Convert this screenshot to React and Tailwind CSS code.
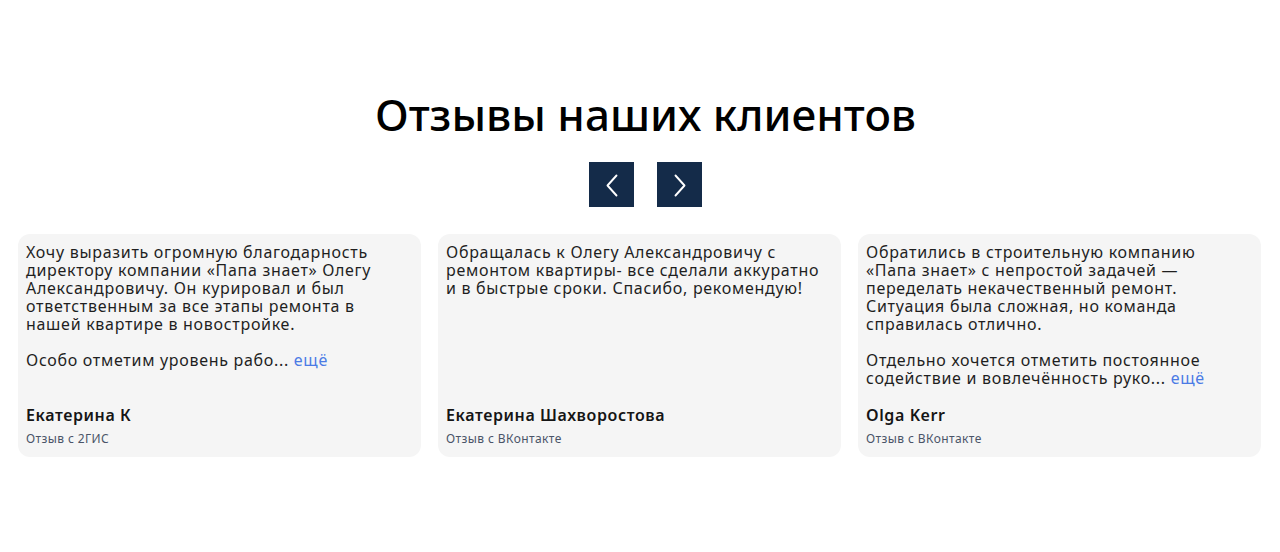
import React from 'react'

// Lines are kept as they wrap on the live site
const REVIEWS = [
  {
    id: 1,
    text: [
      [
        'Хочу выразить огромную благодарность',
        'директору компании «Папа знает» Олегу',
        'Александровичу. Он курировал и был',
        'ответственным за все этапы ремонта в',
        'нашей квартире в новостройке.',
      ],
      ['Особо отметим уровень рабо...'],
    ],
    more: true,
    name: 'Екатерина К',
    source: 'Отзыв с 2ГИС',
  },
  {
    id: 2,
    text: [
      [
        'Обращалась к Олегу Александровичу с',
        'ремонтом квартиры- все сделали аккуратно',
        'и в быстрые сроки. Спасибо, рекомендую!',
      ],
    ],
    more: false,
    name: 'Екатерина Шахворостова',
    source: 'Отзыв с ВКонтакте',
  },
  {
    id: 3,
    text: [
      [
        'Обратились в строительную компанию',
        '«Папа знает» с непростой задачей —',
        'переделать некачественный ремонт.',
        'Ситуация была сложная, но команда',
        'справилась отлично.',
      ],
      ['Отдельно хочется отметить постоянное', 'содействие и вовлечённость руко...'],
    ],
    more: true,
    name: 'Olga Kerr',
    source: 'Отзыв с ВКонтакте',
  },
]

function Arrow({ dir }) {
  return (
    <svg className="h-6 w-6" fill="none" viewBox="0 0 24 24" stroke="currentColor">
      <path
        strokeLinecap="round"
        strokeLinejoin="round"
        strokeWidth={1.9}
        d={dir === 'left' ? 'M16.5 2.5L7.5 12.5l9 10' : 'M7.5 2.5l9 10-9 10'}
      />
    </svg>
  )
}

function ReviewCard({ review }) {
  return (
    <div className="flex h-[223px] flex-col rounded-xl bg-[#f5f5f5] px-2 pt-[9px] pb-[10px]">
      <div className="whitespace-nowrap text-[16px] leading-[18px] tracking-[0.7px] text-[#1f1f1f]">
        {review.text.map((lines, i) => {
          const last = i === review.text.length - 1
          return (
            <p key={i} className={i > 0 ? 'mt-[18px]' : ''}>
              {lines.map((line, j) => (
                <React.Fragment key={j}>
                  {j > 0 && <br />}
                  {line}
                </React.Fragment>
              ))}
              {review.more && last && (
                <>
                  {' '}
                  <span className="text-[#4b7be5]">ещё</span>
                </>
              )}
            </p>
          )
        })}
      </div>
      <div className="mt-auto">
        <div className="text-[16px] font-semibold leading-[20px] tracking-[0.6px] text-[#151515]">{review.name}</div>
        <div className="mt-[6px] text-[12px] leading-[16px] tracking-[0.4px] text-[#4a5468]">{review.source}</div>
      </div>
    </div>
  )
}

export default function App() {
  return (
    <section className="min-h-[552px] bg-white font-['Noto_Sans',sans-serif]">
      <div className="flex flex-col items-center pt-[86px] pl-[11px]">
        <h2 className="text-[44px] leading-[56px] font-medium text-black">Отзывы наших клиентов</h2>
        <div className="mt-[20px] flex gap-[23px]">
          <button type="button" className="flex h-[45px] w-[45px] items-center justify-center bg-[#142b49] text-white" aria-label="Назад">
            <Arrow dir="left" />
          </button>
          <button type="button" className="flex h-[45px] w-[45px] items-center justify-center bg-[#142b49] text-white" aria-label="Вперёд">
            <Arrow dir="right" />
          </button>
        </div>
      </div>
      <div className="mt-[27px] grid grid-cols-3 gap-[17px] pl-[18px] pr-[19px]">
        {REVIEWS.map((r) => (
          <ReviewCard key={r.id} review={r} />
        ))}
      </div>
    </section>
  )
}
